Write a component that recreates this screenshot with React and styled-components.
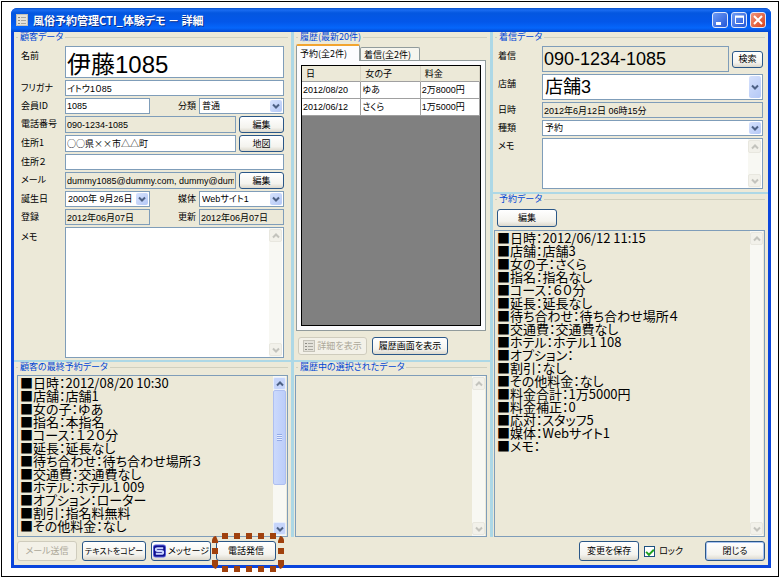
import React from 'react'
import styled, { createGlobalStyle, css } from 'styled-components'

const lastBooking = `■日時：2012/08/20 10:30
■店舗：店舗1
■女の子：ゆあ
■指名：本指名
■コース：１２０分
■延長：延長なし
■待ち合わせ：待ち合わせ場所３
■交通費：交通費なし
■ホテル：ホテル1 009
■オプション：ローター
■割引：指名料無料
■その他料金：なし`

const booking = `■日時：2012/06/12 11:15
■店舗：店舗3
■女の子：さくら
■指名：指名なし
■コース：６０分
■延長：延長なし
■待ち合わせ：待ち合わせ場所４
■交通費：交通費なし
■ホテル：ホテル1 108
■オプション：
■割引：なし
■その他料金：なし
■料金合計：1万5000円
■料金補正：0
■応対：スタッフ5
■媒体：Webサイト1
■メモ：`

const history = [
  { date: '2012/08/20', name: 'ゆあ', price: '2万8000円' },
  { date: '2012/06/12', name: 'さくら', price: '1万5000円' },
]

function Chevron({ up, color = '#4d6185' }) {
  return (
    <svg width="8" height="6" viewBox="0 0 8 6" aria-hidden="true">
      <path d={up ? 'M1 4.5L4 1.5L7 4.5' : 'M1 1.5L4 4.5L7 1.5'} fill="none" stroke={color} strokeWidth="2" />
    </svg>
  )
}

function FormIcon() {
  return (
    <svg width="12" height="12" viewBox="0 0 12 12" aria-hidden="true">
      <rect x="0.5" y="0.5" width="11" height="11" fill="#e4e2da" stroke="#c4c2b8" />
      <path d="M2 3.5h2M2 6.5h2M2 9.5h2" stroke="#8c8b84" />
      <path d="M5 3.5h5M5 6.5h5M5 9.5h5" stroke="#a9a8a0" />
    </svg>
  )
}

// S mark in front of the message button
function MessageIcon() {
  return (
    <svg width="13" height="14" viewBox="0 0 14 14" aria-hidden="true">
      <rect width="14" height="14" rx="3" fill="#5a64e0" />
      <rect x="1" y="1" width="12" height="12" rx="2" fill="#10108c" />
      <path d="M11 4H5Q3 4 3 5.5T5 7H9Q11 7 11 8.5T9 10H3" fill="none" stroke="#c9d4ff" strokeWidth="2" />
    </svg>
  )
}

function Combo({ id, label, value, big }) {
  return (
    <ComboBox>
      <Select id={id} aria-label={label} defaultValue={value} $big={big}>
        <option>{value}</option>
      </Select>
      <Drop><Chevron /></Drop>
    </ComboBox>
  )
}

function TextArea({ id, label, value, gray, active }) {
  return (
    <AreaBox $gray={gray}>
      <Area id={id} aria-label={label} defaultValue={value} spellCheck={false} wrap="off" />
      <Scroll>
        <ScrollButton type="button" aria-label="上へ" $active={active}>
          <Chevron up color={active ? '#4d6185' : '#c3c3bd'} />
        </ScrollButton>
        {active && <Thumb />}
        <ScrollButton type="button" aria-label="下へ" $active={active}>
          <Chevron color={active ? '#4d6185' : '#c3c3bd'} />
        </ScrollButton>
      </Scroll>
    </AreaBox>
  )
}

function Customer() {
  return (
    <Panel>
      <GroupTitle>顧客データ</GroupTitle>
      <Form>
        <Row $h={32}>
          <Label htmlFor="name" $low>名前</Label>
          <Input id="name" defaultValue="伊藤1085" $size={24} />
        </Row>
        <Row>
          <Label htmlFor="kana">フリガナ</Label>
          <Input id="kana" defaultValue="イトウ1０85" />
        </Row>
        <Row>
          <Label htmlFor="member">会員ID</Label>
          <Half><Input id="member" defaultValue="1085" /></Half>
          <SubLabel htmlFor="kind">分類</SubLabel>
          <Half><Combo id="kind" value="普通" /></Half>
        </Row>
        <Row $h={17}>
          <Label htmlFor="tel">電話番号</Label>
          <Input id="tel" defaultValue="090-1234-1085" readOnly />
          <RowButton type="button">編集</RowButton>
        </Row>
        <Row $h={17}>
          <Label htmlFor="address1">住所1</Label>
          <Input id="address1" defaultValue="○○県××市△△町" $wide />
          <RowButton type="button">地図</RowButton>
        </Row>
        <Row>
          <Label htmlFor="address2">住所２</Label>
          <Input id="address2" />
        </Row>
        <Row $h={17}>
          <Label htmlFor="mail">メール</Label>
          <Input id="mail" defaultValue="dummy1085@dummy.com, dummy@dummy.com" readOnly />
          <RowButton type="button">編集</RowButton>
        </Row>
        <Row>
          <Label htmlFor="birth">誕生日</Label>
          <Half><Combo id="birth" value="2000年  9月26日" /></Half>
          <SubLabel htmlFor="media">媒体</SubLabel>
          <Half><Combo id="media" value="Webサイト1" /></Half>
        </Row>
        <Row>
          <Label htmlFor="created">登録</Label>
          <Half><Input id="created" defaultValue="2012年06月07日" readOnly /></Half>
          <SubLabel htmlFor="updated">更新</SubLabel>
          <Half><Input id="updated" defaultValue="2012年06月07日" readOnly /></Half>
        </Row>
        <MemoRow>
          <Label htmlFor="memo" $low>メモ</Label>
          <TextArea id="memo" />
        </MemoRow>
      </Form>
    </Panel>
  )
}

function History() {
  return (
    <Panel>
      <GroupTitle>履歴(最新20件)</GroupTitle>
      <Tabs role="tablist">
        <Tab type="button" role="tab" aria-selected="true" $active>予約(全2件)</Tab>
        <Tab type="button" role="tab" aria-selected="false">着信(全2件)</Tab>
      </Tabs>
      <TabPage>
        <Grid>
          <Table>
            <thead>
              <tr><th>日</th><th>女の子</th><th>料金</th></tr>
            </thead>
            <tbody>
              {history.map((item) => (
                <tr key={item.date}>
                  <td>{item.date}</td>
                  <td>{item.name}</td>
                  <td>{item.price}</td>
                </tr>
              ))}
            </tbody>
          </Table>
        </Grid>
      </TabPage>
      <HistoryButtons>
        <Button type="button" disabled $w={69}><FormIcon />詳細を表示</Button>
        <Button type="button" $w={76}>履歴画面を表示</Button>
      </HistoryButtons>
    </Panel>
  )
}

function Call() {
  return (
    <Panel>
      <GroupTitle>着信データ</GroupTitle>
      <Form $call>
        <Row $h={26}>
          <Label htmlFor="from" $low>着信</Label>
          <Input id="from" defaultValue="090-1234-1085" readOnly $size={18} />
          <RowButton type="button" $w={31}>検索</RowButton>
        </Row>
        <Row $h={26}>
          <Label htmlFor="shop" $low>店舗</Label>
          <Combo id="shop" value="店舗3" big />
        </Row>
        <Row>
          <Label htmlFor="time">日時</Label>
          <Input id="time" defaultValue="2012年6月12日 06時15分" readOnly />
        </Row>
        <Row>
          <Label htmlFor="type">種類</Label>
          <Combo id="type" value="予約" />
        </Row>
        <MemoRow>
          <Label htmlFor="callMemo">メモ</Label>
          <TextArea id="callMemo" />
        </MemoRow>
      </Form>
    </Panel>
  )
}

// dotted frame round the call button
function Marker() {
  return (
    <MarkerSvg width="72" height="40" viewBox="0 0 72 40" aria-hidden="true">
      <g fill="none" stroke="#a0410d" strokeWidth="6">
        <path d="M10 3H64M10 36H64" strokeDasharray="6 6" />
        <path d="M3 15V34M69 15V34" strokeDasharray="6 6" />
      </g>
      <g fill="#a0410d">
        <path d="M0 10V7Q1 3 4 3L6 8V10ZM72 10V7Q71 3 68 3L66 8V10Z" />
        <path d="M0 29H6V32L4 36Q1 35 0 32ZM72 29H66V32L68 36Q71 35 72 32Z" />
      </g>
    </MarkerSvg>
  )
}

function App() {
  return (
    <Frame>
      <Global />
      <Window>
        <TitleBar>
          <FormIcon />
          <h1>風俗予約管理CTI_体験デモ － 詳細</h1>
          <Control type="button" aria-label="最小化">
            <svg width="14" height="14"><path d="M3 10.5h5" stroke="#fff" strokeWidth="3" /></svg>
          </Control>
          <Control type="button" aria-label="最大化">
            <svg width="14" height="14"><path d="M3.5 4v6.5h8V4M3 4h9" fill="none" stroke="#fff" /><path d="M3 3.5h9" stroke="#fff" strokeWidth="2" /></svg>
          </Control>
          <Control type="button" aria-label="閉じる" $close>
            <svg width="14" height="14"><path d="M3 3l8 8M11 3l-8 8" stroke="#fff" strokeWidth="2" /></svg>
          </Control>
        </TitleBar>

        <Body>
          <Columns>
            <Column $rows="328fr 175fr">
              <Customer />
              <Panel>
                <GroupTitle>顧客の最終予約データ</GroupTitle>
                <ListWrap>
                  <TextArea label="顧客の最終予約データ" value={lastBooking} gray active />
                </ListWrap>
              </Panel>
            </Column>
            <Column $rows="328fr 175fr">
              <History />
              <Panel>
                <GroupTitle>履歴中の選択されたデータ</GroupTitle>
                <ListWrap $narrow>
                  <TextArea label="履歴中の選択されたデータ" value="" gray />
                </ListWrap>
              </Panel>
            </Column>
            <Column $rows="160fr 343fr">
              <Call />
              <Panel>
                <GroupTitle>予約データ</GroupTitle>
                <EditBar>
                  <Button type="button" $w={60}>編集</Button>
                </EditBar>
                <ListWrap $narrow>
                  <TextArea label="予約データ" value={booking} gray />
                </ListWrap>
              </Panel>
            </Column>
          </Columns>

          <Footer>
            <Button type="button" disabled $w={60} $tall>メール送信</Button>
            <Button type="button" $w={64} $tall $small>テキストをコピー</Button>
            <Button type="button" $w={60} $tall><MessageIcon />メッセージ</Button>
            <Marked>
              <Button type="button" $w={60} $tall>電話発信</Button>
              <Marker />
            </Marked>
            <Spacer />
            <Button type="button" $w={60} $tall>変更を保存</Button>
            <Check>
              <input type="checkbox" defaultChecked />
              ロック
            </Check>
            <Button type="button" $w={60} $tall $default>閉じる</Button>
          </Footer>
        </Body>
      </Window>
    </Frame>
  )
}

export default App

const Global = createGlobalStyle`
  * {
    box-sizing: border-box;
  }
  body {
    margin: 1px 1px 0;
    background: #fff;
  }
  body, button, input, select, textarea {
    font-family: "Noto Sans CJK JP", sans-serif;
    font-feature-settings: "palt";
    font-size: 9px;
    line-height: 12px;
    color: #000;
  }
`

const Frame = styled.div`
  display: flex;
  min-height: calc(100vh - 1px);
  padding: 6px 7px 8px 9px;
  border: 1px solid #000;
`

const Window = styled.main`
  flex: 1;
  display: flex;
  flex-direction: column;
  min-width: 0;
  border-radius: 6px 6px 0 0;
  background: #0a45dc;
`

const TitleBar = styled.header`
  display: flex;
  align-items: center;
  gap: 3px;
  height: 24px;
  padding: 0 5px;
  border-radius: 6px 6px 0 0;
  background: linear-gradient(#0a50c8 0, #1a6cf0 2px, #0457e0 5px, #0357ea 14px, #0566fb 20px, #0347d0 24px);

  h1 {
    flex: 1;
    margin: 0 0 0 2px;
    font-size: 11px;
    line-height: 14px;
    font-weight: bold;
    color: #fff;
    text-shadow: 1px 1px #0a2f8c;
  }
`

const Control = styled.button`
  width: 16px;
  height: 16px;
  padding: 0;
  border: 1px solid #dfe8fb;
  border-radius: 3px;
  background: ${props => (props.$close ? 'linear-gradient(135deg, #f0947a, #d8431c)' : 'linear-gradient(135deg, #6f9cf5, #2257d8)')};

  svg {
    display: block;
  }
`

const Body = styled.div`
  flex: 1;
  display: flex;
  flex-direction: column;
  margin: 0 3px 3px;
  background: #ece9d8;
`

const Columns = styled.div`
  flex: 1;
  display: grid;
  grid-template-columns: 277fr 196fr 275fr;
  gap: 3px;
  background: #add8e6;
`

const Column = styled.div`
  display: grid;
  grid-template-rows: ${props => props.$rows};
  gap: 2px;
  min-width: 0;
`

const Panel = styled.section`
  display: flex;
  flex-direction: column;
  min-width: 0;
  min-height: 0;
  background: #ece9d8;
`

const GroupTitle = styled.h2`
  display: flex;
  align-items: center;
  gap: 2px;
  height: 10px;
  margin: 0 3px 3px 2px;
  font-size: 9px;
  line-height: 10px;
  font-weight: normal;
  color: #0046d5;
  white-space: nowrap;

  &::before, &::after {
    content: '';
    width: 2px;
    height: 1px;
    background: #d0d0bf;
  }
  &::after {
    flex: 1;
  }
`

const Form = styled.div`
  flex: 1;
  display: flex;
  flex-direction: column;
  gap: 2px;
  padding: ${props => (props.$call ? '1px 5px 3px' : '1px 7px 2px')};
`

const Row = styled.div`
  display: flex;
  height: ${props => props.$h || 16}px;
`

const MemoRow = styled(Row)`
  flex: 1;
  height: auto;
`

const Label = styled.label`
  flex: none;
  width: 44px;
  padding-top: ${props => (props.$low ? 4 : 2)}px;
  white-space: nowrap;
`

const SubLabel = styled.label`
  flex: 1;
  padding: 2px 3px 0 0;
  text-align: right;
  white-space: nowrap;
`

const Half = styled.div`
  flex: none;
  display: flex;
  width: 85px;
`

const Input = styled.input`
  flex: 1;
  min-width: 0;
  width: 100%;
  padding: 0 1px;
  border: 1px solid #7f9db9;
  font-family: ${props => !props.$wide && '"Liberation Sans",'} "Noto Sans CJK JP", sans-serif;
  font-size: ${props => props.$size || 9}px;
  line-height: normal;
  background: ${props => (props.readOnly ? '#ece9d8' : '#fff')};
  outline: none;
`

const ComboBox = styled.div`
  flex: 1;
  display: flex;
  min-width: 0;
  padding: 1px;
  border: 1px solid #7f9db9;
  background: #fff;
`

const Select = styled.select`
  flex: 1;
  min-width: 0;
  padding: 0 1px;
  border: 0;
  background: transparent;
  font-family: "Liberation Sans", "Noto Sans CJK JP", sans-serif;
  appearance: none;
  white-space: pre;
  outline: none;
  ${props => props.$big && css`
    font-size: 18px;
    line-height: 22px;
  `}
`

const Drop = styled.span`
  flex: none;
  display: flex;
  align-items: center;
  justify-content: center;
  width: 12px;
  border-radius: 2px;
  background: linear-gradient(135deg, #d6e2fd, #b4c8f6);
  pointer-events: none;
`

const Button = styled.button`
  flex: none;
  display: flex;
  align-items: center;
  justify-content: center;
  gap: 2px;
  width: ${props => props.$w}px;
  height: ${props => (props.$tall ? 20 : 18)}px;
  padding: 0;
  border: 1px solid #2a5788;
  border-radius: 3px;
  background: linear-gradient(#fff, #f4f3ee 70%, #dcd8cc);
  font-size: ${props => (props.$small ? 8 : 9)}px;
  white-space: nowrap;
  ${props => props.$default && css`
    box-shadow: inset 0 0 0 1px #a9c4f0;
  `}

  &:disabled {
    border-color: #cfccbd;
    background: #f3f1e8;
    color: #aca899;
  }
`

const RowButton = styled(Button)`
  align-self: center;
  width: ${props => props.$w || 45}px;
  height: 17px;
  margin-left: 3px;
`

const AreaBox = styled.div`
  flex: 1;
  display: flex;
  min-width: 0;
  padding: 0 1px;
  border: 1px solid #7f9db9;
  background: ${props => (props.$gray ? '#ece9d8' : '#fff')};
`

const Area = styled.textarea`
  flex: 1;
  min-width: 0;
  height: 100%;
  padding: 0 0 0 1px;
  border: 0;
  background: transparent;
  font-size: 13px;
  line-height: 13px;
  resize: none;
  overflow: hidden;
  outline: none;
`

const Scroll = styled.div`
  flex: none;
  display: flex;
  flex-direction: column;
  justify-content: space-between;
  width: 13px;
  padding: 1px 0;
  background: #f8f8f3;
`

const ScrollButton = styled.button`
  display: flex;
  align-items: center;
  justify-content: center;
  height: 13px;
  padding: 0;
  border: 1px solid ${props => (props.$active ? '#e8effd' : '#e8e7df')};
  border-radius: 2px;
  background: ${props => (props.$active ? '#c6d5fb' : '#f2f1ea')};
`

const Thumb = styled.div`
  flex: 0 0 60%;
  margin-bottom: auto;
  border: 1px solid #aebff0;
  border-radius: 2px;
  background:
    repeating-linear-gradient(#93a9e6 0 1px, #e6eefe 1px 2px) center / 5px 7px no-repeat,
    linear-gradient(90deg, #cbd9fc, #bccdf9);
`

const ListWrap = styled.div`
  flex: 1;
  display: flex;
  min-height: 0;
  padding: ${props => (props.$narrow ? '0 3px 0 1px' : '0 3px')};
`

const Tabs = styled.div`
  display: flex;
  align-items: flex-end;
  height: 15px;
  padding-left: 2px;
`

const Tab = styled.button`
  width: 60px;
  height: 13px;
  padding: 0 3px;
  border: 1px solid #919b9c;
  border-bottom: 0;
  border-radius: 2px 2px 0 0;
  background: #f6f5ee;
  line-height: 11px;
  text-align: left;
  white-space: nowrap;
  ${props => props.$active && css`
    z-index: 1;
    width: 64px;
    height: 17px;
    margin-bottom: -1px;
    border-top: 2px solid #f2a430;
    background: #fcfcfe;
  `}
`

const TabPage = styled.div`
  flex: 1;
  display: flex;
  margin: 0 4px 0 2px;
  padding: 4px;
  border: 1px solid #919b9c;
  background: #fcfcfe;
`

const Grid = styled.div`
  flex: 1;
  border: 1px solid #000;
  background: #808080;
`

const Table = styled.table`
  width: 100%;
  border-collapse: separate;
  border-spacing: 0;
  table-layout: fixed;
  font-family: "Liberation Sans", "Noto Sans CJK JP", sans-serif;

  th, td {
    height: 17px;
    padding: 0 1px;
    border-right: 1px solid #a0a0a0;
    border-bottom: 1px solid #a0a0a0;
    background: #fff;
    font-weight: normal;
    text-align: left;
  }
  th {
    height: 16px;
    padding: 0 4px;
    border-right-color: #d8d4c4;
    background: #ece9d8;
  }
`

const HistoryButtons = styled.div`
  display: flex;
  gap: 5px;
  padding: 6px 4px 5px;
`

const EditBar = styled.div`
  padding: 2px 4px 3px;
`

const Footer = styled.footer`
  display: flex;
  align-items: center;
  gap: 5px;
  height: 28px;
  padding: 0 3px;
`

const Marked = styled.div`
  position: relative;
`

const MarkerSvg = styled.svg`
  position: absolute;
  top: -8px;
  left: -4px;
  pointer-events: none;
`

const Spacer = styled.div`
  flex: 1;
`

const Check = styled.label`
  display: flex;
  align-items: center;
  gap: 4px;
  margin-right: 17px;

  input {
    width: 11px;
    height: 11px;
    margin: 0;
    border: 1px solid #1c5180;
    background: #fff;
    appearance: none;
  }
  input:checked::before {
    content: '';
    display: block;
    width: 6px;
    height: 3px;
    margin: 2px 0 0 1px;
    border: solid #21a121;
    border-width: 0 0 2px 2px;
    transform: rotate(-45deg);
  }
`
